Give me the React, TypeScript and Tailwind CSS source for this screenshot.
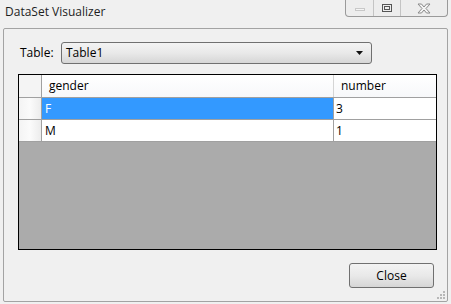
import React from 'react';

const font = { fontFamily: '"Open Sans", "Noto Sans", sans-serif' };

function TitleButtons() {
  return (
    <div className="flex h-[17px] w-[103px] rounded-b-[4px] border border-t-0 border-[#9a9a9a] bg-[#ededed]">
      <div className="flex w-[28px] items-center justify-center border-r border-[#c4c4c4]">
        <div className="mt-[3px] h-[3px] w-[10px] border border-[#c8c8c8] bg-[#f4f4f4]" />
      </div>
      <div className="flex w-[27px] items-center justify-center border-r border-[#c4c4c4]">
        <div className="flex h-[8px] w-[10px] items-center justify-center border border-[#555]">
          <div className="h-[4px] w-[6px] border border-[#555]" />
        </div>
      </div>
      <div className="flex flex-1 items-center justify-center">
        <svg width="14" height="11" viewBox="0 0 14 11">
          <path
            d="M1 1 H4.5 L7 4 L9.5 1 H13 L9 5.5 L13 10 H9.5 L7 7 L4.5 10 H1 L5 5.5 Z"
            fill="#f4f4f4"
            stroke="#8a8a8a"
            strokeWidth="1"
          />
        </svg>
      </div>
    </div>
  );
}

function ResizeGrip() {
  const dots = [
    [6, 0],
    [3, 3],
    [6, 3],
    [0, 6],
    [3, 6],
    [6, 6],
  ];
  return (
    <svg width="8" height="8" viewBox="0 0 8 8" className="absolute bottom-[2px] right-[2px]">
      {dots.map(([x, y], i) => (
        <rect key={i} x={x} y={y} width="2" height="2" fill="#b8b8b8" />
      ))}
    </svg>
  );
}

const rows = [
  { gender: 'F', number: '3', selected: true },
  { gender: 'M', number: '1', selected: false },
];

export default function App() {
  return (
    <div className="flex h-[304px] w-[451px] flex-col bg-[#f0f0f0] text-[12px] text-black" style={font}>
      {/* title bar */}
      <div className="flex h-[28px] items-start justify-between pr-[3px]">
        <div className="pl-[5px] pt-[3px] text-[12px] text-[#1e1e1e]">DataSet Visualizer</div>
        <TitleButtons />
      </div>

      {/* client panel */}
      <div className="relative mx-[3px] flex h-[274px] flex-col rounded-[2px] border border-[#a3a3a3] bg-[#f0f0f0] pl-[14px] pr-[10px] pt-[13px]">
        <div className="flex h-[22px] items-center">
          <span className="ml-[2px] w-[41px]">Table:</span>
          <div className="flex h-[22px] w-[311px] items-center justify-between rounded-[3px] border border-[#707070] bg-gradient-to-b from-[#f3f3f3] via-[#e9e9e9] to-[#d6d6d6] pl-[4px] pr-[8px]">
            <span>Table1</span>
            <svg width="7" height="4" viewBox="0 0 7 4">
              <path d="M0 0 H7 L3.5 4 Z" fill="#111" />
            </svg>
          </div>
        </div>

        {/* grid */}
        <div className="mt-[10px] flex h-[176px] flex-col border border-black bg-[#ababab]">
          <div className="flex h-[23px] border-b border-[#a0a0a0] bg-gradient-to-b from-white to-[#f7f8fa]">
            <div className="w-[23px] border-r border-[#a0a0a0] bg-[#f4f4f4]" />
            <div className="flex w-[292px] items-center border-r border-[#d5d5d5] pl-[7px]">gender</div>
            <div className="flex flex-1 items-center pl-[7px]">number</div>
          </div>
          {rows.map((r) => (
            <div key={r.gender} className="flex h-[22px] border-b border-[#a0a0a0] bg-white">
              <div className="w-[23px] border-r border-[#a0a0a0] bg-gradient-to-r from-[#f4f4f4] via-[#fbfbfb] to-[#ececec]" />
              <div
                className={
                  r.selected
                    ? 'flex w-[292px] items-center border-r border-[#a0a0a0] bg-[#3399ff] pl-[3px] text-white'
                    : 'flex w-[292px] items-center border-r border-[#a0a0a0] pl-[3px]'
                }
              >
                {r.gender}
              </div>
              <div className="flex flex-1 items-center pl-[2px]">{r.number}</div>
            </div>
          ))}
        </div>

        <div className="mt-[13px] flex justify-end pr-[3px]">
          <button className="h-[25px] w-[85px] rounded-[3px] border border-[#707070] bg-gradient-to-b from-[#f3f3f3] via-[#e9e9e9] to-[#d6d6d6] text-[12px]">
            Close
          </button>
        </div>
        <ResizeGrip />
      </div>
    </div>
  );
}
